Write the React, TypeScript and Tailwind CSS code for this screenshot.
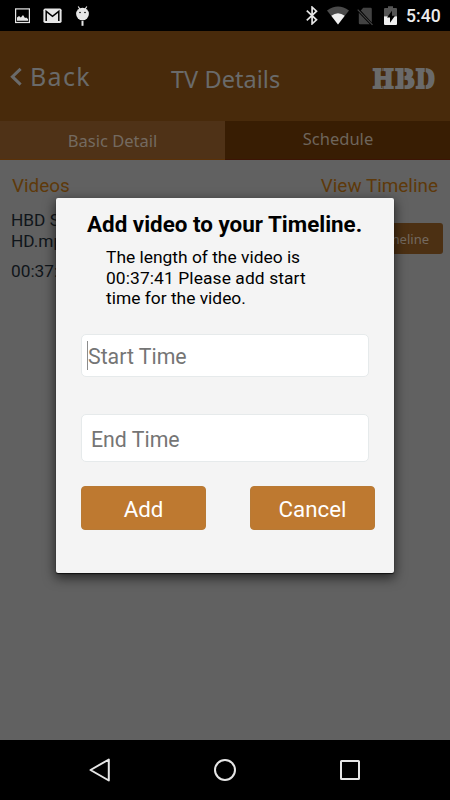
import { useState } from "react";

function StatusBar() {
  return (
    <div className="flex h-[31px] shrink-0 items-start bg-black pl-[15px]">
      <svg className="mt-2 h-4 w-[15px]" viewBox="0 0 15 16" fill="none">
        <rect x="0.6" y="0.9" width="13.8" height="13.6" stroke="#e6e6e6" strokeWidth="1.2" />
        <path d="M2 12.8V9.6l2-1.5 1.8 1.4L8 7l2 3 1.2-.6 1.8 1.6v1.8z" fill="#e6e6e6" />
      </svg>
      <svg className="mt-2 ml-[13px] h-4 w-[19px]" viewBox="0 0 19 16" fill="none">
        <rect x="0.4" y="0.4" width="18.2" height="14.6" rx="1.8" fill="#e6e6e6" />
        <path d="M3.2 13V3.4l6.3 5 6.3-5V13" stroke="#000" strokeWidth="1.5" />
      </svg>
      <svg className="mt-[6px] ml-[14px] h-5 w-[13px]" viewBox="0 0 13 20">
        <path d="M2.2.5 4 3.3M10.8.5 9 3.3" stroke="#e6e6e6" strokeWidth="1.2" />
        <ellipse cx="6.5" cy="8" rx="6.4" ry="6.3" fill="#e6e6e6" />
        <path d="M6.5 14.8v5" stroke="#e6e6e6" strokeWidth="2" />
        <circle cx="4" cy="6.5" r=".8" />
        <circle cx="9" cy="6.5" r=".8" />
      </svg>

      <svg className="mt-[6px] ml-[217px] h-[19px] w-[12px]" viewBox="0 0 12 19" fill="none">
        <path d="m.8 4.6 9.7 9.2-4.4 4V1.2l4.4 4-9.7 9.2" stroke="#e6e6e6" strokeWidth="1.7" />
      </svg>
      <svg className="mt-[6px] ml-[9px] h-5 w-[22px]" viewBox="0 0 22 20">
        <path d="M0 4.4Q11-3.2 22 4.4L11 18.5z" fill="#4a4a4a" />
        <path d="M4.3 9.7q6.7-5 13.4 0L11 18.5z" fill="#f0f0f0" />
      </svg>
      <svg className="mt-[7px] ml-[8px] h-[19px] w-4" viewBox="0 0 16 19">
        <path d="M6.2.8h7.4q1.2 0 1.2 1.2v13.5L3.8 3.6zM1.8 5.8l11 11.4H3q-1.2 0-1.2-1.2z" fill="#434343" />
        <path d="m.7 2.6 14.8 15.2" stroke="#434343" strokeWidth="1.2" />
      </svg>
      <svg className="mt-[6px] ml-[11px] h-5 w-[13px]" viewBox="0 0 13 20">
        <path d="M0 10V3q0-1 1-1h3V.3h5V2h3q1 0 1 1v7z" fill="#555" />
        <path d="M0 10.3h13V18q0 1-1 1H1q-1 0-1-1z" fill="#f0f0f0" />
        <path d="M8 4.8 3 11.5h3v5.2l5-7H8z" fill="#000" />
      </svg>
      <span className="mt-[5px] ml-[9px] font-['Roboto',sans-serif] text-[17.6px] leading-[22px] font-medium text-[#ececec]">
        5:40
      </span>
    </div>
  );
}

function Logo() {
  return (
    <svg className="mt-[28px] h-[40px] w-[65px]" viewBox="0 0 65 40">
      <g
        fill="#6a6a6a"
        stroke="#6a6a6a"
        strokeWidth="2.2"
        className="font-['Liberation_Serif',serif] text-[30px] font-bold"
      >
        <text x="1.3" y="28.5" textLength="20" lengthAdjust="spacingAndGlyphs">H</text>
        <text x="23.8" y="28.5" textLength="18.6" lengthAdjust="spacingAndGlyphs">B</text>
        <text x="44.2" y="28.5" textLength="18.6" lengthAdjust="spacingAndGlyphs">D</text>
      </g>
      <path d="M9.8 8v8M9.8 21v8M32 8v24M53.2 8v24" stroke="#482a0b" strokeWidth="0.9" />
    </svg>
  );
}

function Header() {
  return (
    <header className="flex h-[90px] shrink-0 items-start bg-[#482a0b] pl-[10px] font-['Noto_Sans',sans-serif] text-[#6a6a6a]">
      <button className="flex w-[161px] items-start">
        <svg className="mt-[36px] h-[19px] w-[12px]" viewBox="0 0 12 19" fill="none">
          <path d="M10.6 1.8 2.4 9.7l8.2 7.9" stroke="#6a6a6a" strokeWidth="3" />
        </svg>
        <span className="mt-[27px] ml-2 text-[25px] leading-9 tracking-[1.3px]">Back</span>
      </button>
      <h1 className="mt-[30px] w-[201px] text-[23.5px] leading-9 tracking-[0.05px] whitespace-nowrap">TV Details</h1>
      <Logo />
    </header>
  );
}

function Tabs() {
  return (
    <nav className="grid h-[39px] shrink-0 grid-cols-2 font-['Noto_Sans',sans-serif] text-[16.5px] leading-6">
      <button className="flex justify-center border-b border-[#5a3108] bg-[#4f3217] pt-2 text-[#746a60]">
        Basic Detail
      </button>
      <button className="flex justify-center border-b border-[#3c1404] bg-[#381d03] pt-1.5 pl-px text-[#6e655c]">
        Schedule
      </button>
    </nav>
  );
}

function VideoList() {
  return (
    <main className="grow bg-[#616161] pt-[14px] pl-[11px]">
      <div className="flex justify-between pr-[12px] pl-px text-[18.9px] leading-6 text-[#5e390a]">
        <h2>Videos</h2>
        <button>View Timeline</button>
      </div>
      <div className="mt-[12px] flex justify-between pr-[7px]">
        <div className="w-[120px] text-[17.3px] leading-[20.5px] text-[#10151a]">
          <p>HBD Sample HD.mp4</p>
          <p className="mt-[10px]">00:37:41</p>
        </div>
        <button className="mt-[13px] h-[31px] w-[112px] rounded-[3px] bg-[#4c3013] pr-[14px] pt-0.5 text-right font-['Noto_Sans',sans-serif] text-[13px] text-[#746a60]">
          Add to Timeline
        </button>
      </div>
    </main>
  );
}

function NavBar() {
  return (
    <footer className="flex h-[60px] shrink-0 items-center justify-center gap-[101px] bg-black">
      <svg className="h-6 w-6" viewBox="0 0 24 24" fill="none" stroke="#e6e6e6" strokeWidth="2">
        <path d="M20.8 1.5v21L2.5 12z" strokeLinejoin="round" />
      </svg>
      <svg className="h-6 w-6" viewBox="0 0 24 24" fill="none" stroke="#e6e6e6" strokeWidth="2">
        <circle cx="12" cy="12" r="10" />
      </svg>
      <svg className="h-6 w-6" viewBox="0 0 24 24" fill="none" stroke="#e6e6e6" strokeWidth="2">
        <rect x="3" y="3" width="18" height="18" rx="0.5" />
      </svg>
    </footer>
  );
}

function TimelineDialog() {
  const [start, setStart] = useState("");
  const [end, setEnd] = useState("");

  return (
    <div className="absolute top-[198px] left-[56px] h-[375px] w-[338px] rounded-[2px] bg-[#f4f4f4] shadow-[0_1px_1px_0_#111,0_4px_12px_1px_rgba(0,0,0,0.6)]">
      <h2 className="pt-[12px] pl-[31px] text-[22.4px] leading-7 font-bold whitespace-nowrap text-black">
        Add video to your Timeline.
      </h2>
      <p className="mt-[9px] ml-[50px] w-[225px] text-[17.4px] leading-[20.5px] text-black">
        The length of the video is <br />
        <span className="tracking-[0.1px]">00:37:41 Please add start</span> <br />
        time for the video.
      </p>
      <div className="mt-[25px] ml-[25px] flex h-[43px] w-[288px] items-center rounded-[5px] border border-[#e6eaeb] bg-white pl-[5px]">
        <span className="h-[29px] w-px bg-[#8c8c8c]" />
        <input
          value={start}
          onChange={(e) => setStart(e.target.value)}
          placeholder="Start Time"
          className="w-[270px] pt-1 text-[21.3px] outline-none placeholder:text-[#757575]"
        />
      </div>
      <div className="mt-[37px] ml-[25px] flex h-[48px] w-[288px] items-center rounded-[5px] border border-[#e6eaeb] bg-white pl-[9px]">
        <input
          value={end}
          onChange={(e) => setEnd(e.target.value)}
          placeholder="End Time"
          className="w-[265px] pt-[5px] text-[21.3px] outline-none placeholder:text-[#757575]"
        />
      </div>
      <div className="mt-6 ml-[25px] flex gap-[44px] text-[22.3px] text-white">
        <button className="h-[44px] w-[125px] rounded-[4px] border border-[#b87a35] bg-[#be7930] pt-1">Add</button>
        <button className="h-[44px] w-[125px] rounded-[4px] border border-[#b87a35] bg-[#be7930] pt-1">Cancel</button>
      </div>
    </div>
  );
}

export default function App() {
  return (
    <div className="relative flex h-[800px] w-[450px] flex-col overflow-hidden font-['Roboto',sans-serif]">
      <StatusBar />
      <Header />
      <Tabs />
      <VideoList />
      <NavBar />
      <TimelineDialog />
    </div>
  );
}
